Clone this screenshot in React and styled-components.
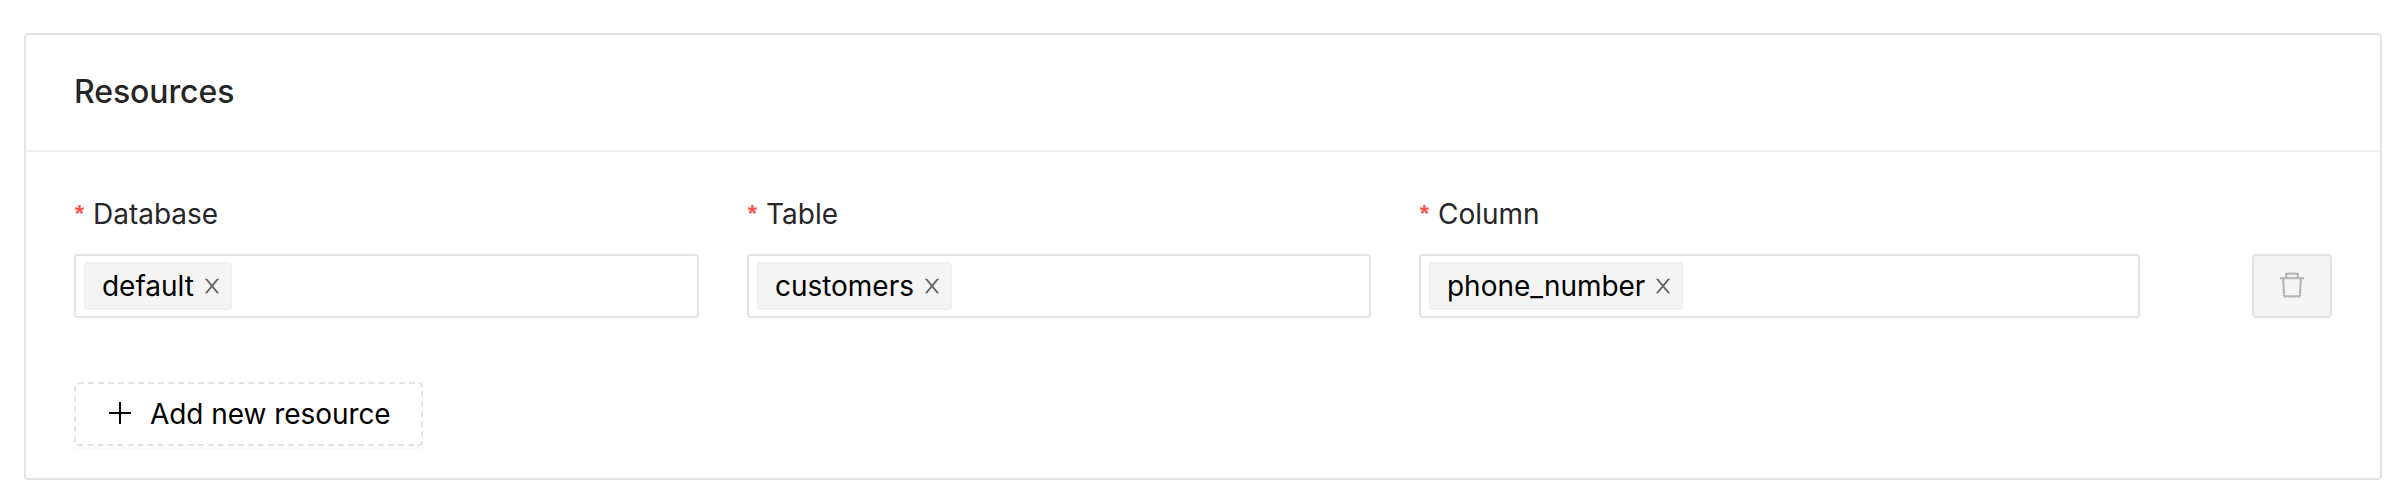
import React from 'react';
import styled, { createGlobalStyle } from 'styled-components';

const GlobalStyle = createGlobalStyle`
  * { box-sizing: border-box; }
  body {
    margin: 0;
    background: #fff;
    font-family: Inter, "Liberation Sans", sans-serif;
    font-size: 28px;
    color: #000;
  }
`;

const Page = styled.main`
  padding: 33px 24px 24px;
`;

const Card = styled.section`
  height: 447px;
  border: 2px solid #e3e2e8;
  border-radius: 4px;
`;

const CardHeader = styled.header`
  display: flex;
  align-items: center;
  height: 117px;
  padding: 0 48px 2px;
  border-bottom: 2px solid #f0f0f0;
`;

const Title = styled.h2`
  margin: 0;
  font-size: 32px;
  font-weight: 500;
  line-height: 50px;
  letter-spacing: -0.1px;
  color: #262626;
`;

const CardBody = styled.div`
  padding: 40px 48px 0;
`;

const ResourceRow = styled.div`
  display: flex;
  align-items: flex-end;
  margin-bottom: 64px;
`;

const Field = styled.div`
  flex: none;
  width: ${(p) => p.$width}px;
  margin-right: ${(p) => p.$gap}px;
`;

const Label = styled.label`
  display: flex;
  align-items: center;
  height: 44px;
  margin-bottom: 18px;
  color: #262626;
`;

const Required = styled.span`
  width: 11px;
  margin-right: 8px;
  color: #f5554f;
  font-family: "Liberation Sans", sans-serif;
  font-size: 24px;
  font-weight: 700;
  line-height: 28px;
  text-align: center;
`;

const SelectBox = styled.div`
  display: flex;
  align-items: center;
  height: 64px;
  padding: 0 8px;
  border: 2px solid #e3e2e8;
  border-radius: 4px;
  background: #fff;
`;

const Tag = styled.span`
  display: flex;
  align-items: center;
  height: 48px;
  padding: 0 8px 0 16px;
  border: 2px solid #f0f0f0;
  border-radius: 4px;
  background: #f4f4f4;
  letter-spacing: -0.03px;
`;

const TagRemove = styled.button`
  display: flex;
  margin: 0 0 0 8px;
  padding: 0;
  border: 0;
  background: none;
  color: #666;
`;

const DeleteButton = styled.button`
  display: flex;
  align-items: center;
  justify-content: center;
  width: 80px;
  height: 64px;
  margin-left: auto;
  padding: 0 0 3px;
  border: 2px solid #e3e2e8;
  border-radius: 4px;
  background: #f4f4f4;
  color: #b8b8b8;
`;

const AddButton = styled.button`
  display: flex;
  align-items: center;
  width: 349px;
  height: 64px;
  padding: 0 30px;
  gap: 16px;
  border: 2px dashed #e3e2e8;
  border-radius: 4px;
  background: #fff;
  box-shadow: 0 4px 0 rgba(0, 0, 0, 0.016);
  color: #000;
  font: inherit;
  letter-spacing: -0.06px;
  white-space: nowrap;

  svg { margin-bottom: 3px; }
`;

const Svg = styled.svg`
  display: block;
  flex: none;
  width: ${(p) => p.$size}px;
  height: ${(p) => p.$size}px;
  fill: currentColor;
`;

const paths = {
  close:
    'M563.8 512l262.5-312.9c4.4-5.2.7-13.1-6.1-13.1h-79.8c-4.7 0-9.2 2.1-12.3 5.7L511.6 449.8 295.1 191.7c-3-3.6-7.5-5.7-12.3-5.7H203c-6.8 0-10.5 7.9-6.1 13.1L459.4 512 196.9 824.9A7.95 7.95 0 00203 838h79.8c4.7 0 9.2-2.1 12.3-5.7l216.5-258.1 216.5 258.1c3 3.6 7.5 5.7 12.3 5.7h79.8c6.8 0 10.5-7.9 6.1-13.1L563.8 512z',
  trash:
    'M360 184h-8c4.4 0 8-3.6 8-8v8h304v-8c0 4.4 3.6 8 8 8h-8v72h72v-80c0-35.3-28.7-64-64-64H352c-35.3 0-64 28.7-64 64v80h72v-72zm504 72H160c-17.7 0-32 14.3-32 32v32c0 4.4 3.6 8 8 8h60.4l24.7 523c1.6 34.1 29.8 61 63.9 61h454c34.2 0 62.3-26.8 63.9-61l24.7-523H888c4.4 0 8-3.6 8-8v-32c0-17.7-14.3-32-32-32zM731.3 840H292.7l-24.2-512h487l-24.2 512z',
  plus:
    'M480 160h64v320h320v64H544v320h-64V544H160v-64h320z',
};

const Icon = ({ name, size }) => (
  <Svg $size={size} viewBox="64 64 896 896" aria-hidden="true">
    <path d={paths[name]} />
  </Svg>
);

const fields = [
  { label: 'Database', value: 'default', width: 625, gap: 48 },
  { label: 'Table', value: 'customers', width: 624, gap: 48 },
  { label: 'Column', value: 'phone_number', width: 721, gap: 0 },
];

export default function App() {
  return (
    <>
      <GlobalStyle />
      <Page>
        <Card>
          <CardHeader>
            <Title>Resources</Title>
          </CardHeader>
          <CardBody>
            <ResourceRow>
              {fields.map((f) => (
                <Field key={f.label} $width={f.width} $gap={f.gap}>
                  <Label>
                    <Required>*</Required>
                    {f.label}
                  </Label>
                  <SelectBox>
                    <Tag>
                      {f.value}
                      <TagRemove aria-label={`Remove ${f.value}`}>
                        <Icon name="close" size={20} />
                      </TagRemove>
                    </Tag>
                  </SelectBox>
                </Field>
              ))}
              <DeleteButton aria-label="Delete resource" disabled>
                <Icon name="trash" size={28} />
              </DeleteButton>
            </ResourceRow>
            <AddButton>
              <Icon name="plus" size={28} />
              Add new resource
            </AddButton>
          </CardBody>
        </Card>
      </Page>
    </>
  );
}
